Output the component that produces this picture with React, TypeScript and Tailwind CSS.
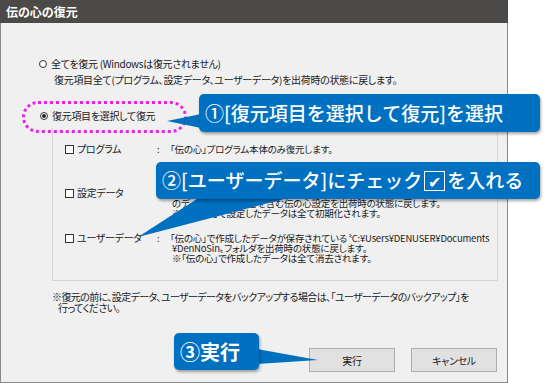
import React from "react";

const jp = "font-[Noto_Sans_CJK_JP,sans-serif]";
const palt = "[font-feature-settings:'palt']";

function Radio({ checked }: { checked?: boolean }) {
  return (
    <span className="flex h-[8px] w-[8px] shrink-0 items-center justify-center rounded-full border border-[#333] bg-white">
      {checked && <span className="h-[4px] w-[4px] rounded-full bg-[#222]" />}
    </span>
  );
}

function Check() {
  return <span className="h-[9px] w-[9px] shrink-0 border border-[#333] bg-white" />;
}

type Row = { label: string; lines: string[]; mt: string };

const ROWS: Row[] = [
  { label: "プログラム", lines: ["「伝の心」プログラム本体のみ復元します。"], mt: "mt-0" },
  {
    label: "設定データ",
    lines: [
      "「伝の心」で設定した環境設定、ユーザー辞書、定型文など",
      "のデータを、登録内容を含む伝の心設定を出荷時の状態に戻します。",
      "※「伝の心」で設定したデータは全て初期化されます。",
    ],
    mt: "mt-[34px]",
  },
  {
    label: "ユーザーデータ",
    lines: [
      "「伝の心」で作成したデータが保存されている〝C:¥Users¥DENUSER¥Documents",
      "¥DenNoSin〟フォルダを出荷時の状態に戻します。",
      "※「伝の心」で作成したデータは全て消去されます。",
    ],
    mt: "mt-[15px]",
  },
];

export default function App() {
  return (
    <div className={`relative h-[383px] w-[550px] overflow-hidden bg-white text-[#1a1a1a] ${jp}`}>
      <div className={`flex h-[383px] w-[508px] flex-col ${palt}`}>
        <div className="flex h-[23px] shrink-0 items-center bg-[#4b4a48] pl-[6px] text-[12px] font-bold text-white">
          伝の心の復元
        </div>
        <div className="flex flex-1 flex-col border-b border-l border-r border-[#8a8a8a] bg-[#f0f0f0] text-[10px] tracking-[-0.3px]">
          <div className="pl-[38px] pt-[35px] leading-[12px]">
            <div className="flex items-center gap-[4px]">
              <Radio />
              <span>全てを復元 (Windowsは復元されません)</span>
            </div>
            <div className="ml-[15px] mt-[4px]">
              復元項目全て(プログラム、設定データ、ユーザーデータ)を出荷時の状態に戻します。
            </div>
            <div className="ml-[1px] mt-[24px] flex items-center gap-[4px]">
              <Radio checked />
              <span>復元項目を選択して復元</span>
            </div>
          </div>

          <div className="ml-[51px] mt-[6px] h-[153px] w-[446px] border-b border-l border-r border-[#d6d6d6] pl-[12px] pt-[16px] text-[9.5px] leading-[10px]">
            {ROWS.map((r) => (
              <div key={r.label} className={`flex ${r.mt}`}>
                <div className="flex w-[92px] shrink-0 items-center gap-[3px] self-start whitespace-nowrap text-[10px]">
                  <Check />
                  <span className="leading-[10px]">{r.label}</span>
                </div>
                <div className="w-[13px] shrink-0">:</div>
                <div className="whitespace-nowrap tracking-[-0.2px]">
                  {r.lines.map((l, i) => (
                    <div key={i} className={i === 0 ? "" : "pl-[2px]"}>
                      {l}
                    </div>
                  ))}
                </div>
              </div>
            ))}
          </div>

          <div className="ml-[51px] mt-[10px] whitespace-nowrap leading-[11px] tracking-[-0.6px]">
            <div>※復元の前に、設定データ、ユーザーデータをバックアップする場合は、「ユーザーデータのバックアップ」を</div>
            <div className="pl-[6px]">行ってください。</div>
          </div>

          <div className="mt-[35px] flex justify-end gap-[16px] pr-[10px]">
            <button className="h-[24px] w-[86px] border border-[#adadad] bg-[#e1e1e1] text-[10px]">実行</button>
            <button className="h-[24px] w-[86px] border border-[#adadad] bg-[#e1e1e1] text-[10px]">キャンセル</button>
          </div>
        </div>
      </div>

      {/* annotations */}
      <div className="absolute left-[22px] top-[101px] h-[32px] w-[165px] rounded-full border-[3px] border-dotted border-[#f01cf0]" />

      <svg className="pointer-events-none absolute left-0 top-0" width="550" height="383">
        <polygon points="201,114 201,128 167,121" fill="#0070c0" />
        <polygon points="200,197 292,197 138,237" fill="#0070c0" />
        <polygon points="257,349 257,364 318,360" fill="#0070c0" />
      </svg>

      <div className="absolute left-[199px] top-[94px] flex h-[38px] w-[341px] items-center whitespace-nowrap rounded-[5px] bg-[#0070c0] pl-[6px] text-[19px] font-medium text-white shadow-[1px_2px_3px_rgba(0,0,0,0.35)]">
        ①[復元項目を選択して復元]を選択
      </div>

      <div className="absolute left-[156px] top-[162px] flex h-[37px] w-[384px] items-center whitespace-nowrap rounded-[5px] bg-[#0070c0] pl-[6px] text-[19px] font-medium text-white shadow-[1px_2px_3px_rgba(0,0,0,0.35)]">
        <span>②[ユーザーデータ]にチェック</span>
        <span className="mx-[2px] flex h-[20px] w-[21px] items-center justify-center border border-white text-[16px] leading-none">✔</span>
        <span>を入れる</span>
      </div>

      <div className="absolute left-[174px] top-[333px] flex h-[37px] w-[85px] items-center rounded-[5px] bg-[#0070c0] pl-[6px] text-[20px] font-bold text-white shadow-[1px_2px_3px_rgba(0,0,0,0.35)]">
        ③実行
      </div>
    </div>
  );
}
